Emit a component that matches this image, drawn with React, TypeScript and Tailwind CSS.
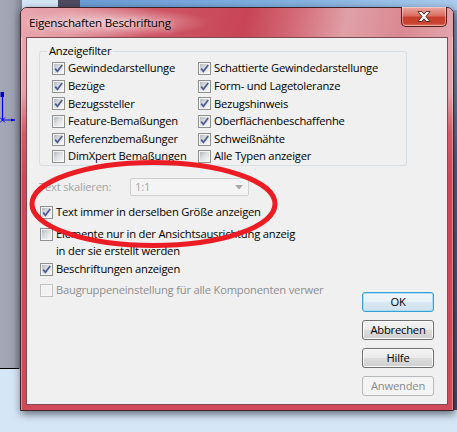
import type { CSSProperties } from 'react';

const uiFont: CSSProperties = { fontFamily: '"Open Sans", "Noto Sans", Arial, sans-serif' };

const leftOptions: [string, boolean][] = [
  ['Gewindedarstellunge', true],
  ['Bezüge', true],
  ['Bezugssteller', true],
  ['Feature-Bemaßungen', false],
  ['Referenzbemaßunger', true],
  ['DimXpert Bemaßungen', false],
];

const rightOptions: [string, boolean][] = [
  ['Schattierte Gewindedarstellunge', true],
  ['Form- und Lagetoleranze', true],
  ['Bezugshinweis', true],
  ['Oberflächenbeschaffenhe', true],
  ['Schweißnähte', true],
  ['Alle Typen anzeiger', false],
];

function CheckBox({ checked = false, disabled = false }: { checked?: boolean; disabled?: boolean }) {
  return (
    <span
      className={`flex h-[13px] w-[13px] shrink-0 items-center justify-center border ${
        disabled ? 'border-[#c2c2c2] bg-[#f6f6f6]' : 'border-[#8e8f8f] bg-[#f6f6f6]'
      }`}
    >
      <span
        className={`relative h-[9px] w-[9px] ${
          disabled ? 'bg-[#f2f2f2]' : 'bg-[linear-gradient(135deg,#b3b8be_0%,#dcdee0_45%,#f7f7f7_100%)]'
        }`}
      >
        {checked && (
          <svg className="absolute -left-[1px] -top-[1px]" width="11" height="11" viewBox="0 0 11 11">
            <path d="M2.2 5.6 L4.4 8.3 L9.2 2" fill="none" stroke="#4b5d90" strokeWidth="1.7" />
          </svg>
        )}
      </span>
    </span>
  );
}

function FilterOption({ label, checked }: { label: string; checked: boolean }) {
  return (
    <div className="flex h-[17.6px] items-center gap-[3px]">
      <CheckBox checked={checked} />
      <span className="whitespace-nowrap">{label}</span>
    </div>
  );
}

function WinButton({ label, kind = 'normal' }: { label: string; kind?: 'normal' | 'default' | 'disabled' }) {
  const look =
    kind === 'default'
      ? 'border-[#3a9fd6] bg-[linear-gradient(#f1f7fb_0%,#e6f0f6_50%,#d9e8f1_51%,#d0e2ee_100%)] shadow-[inset_0_0_0_1px_#a6def8] text-black'
      : kind === 'disabled'
        ? 'border-[#b5b9bc] bg-[#f4f4f4] text-[#8a8a8a]'
        : 'border-[#707070] bg-[linear-gradient(#f3f3f3_0%,#ebebeb_50%,#dddddd_51%,#cfcfcf_100%)] shadow-[inset_0_0_0_1px_#fbfbfb] text-black';
  return (
    <div className={`flex h-[20px] w-[72px] items-center justify-center rounded-[3px] border text-[11.2px] tracking-[-0.2px] ${look}`}>
      {label}
    </div>
  );
}

export default function App() {
  return (
    <div className="relative h-[432px] w-[457px] overflow-hidden bg-[#d5e6f7]" style={uiFont}>
      {/* desktop behind the dialog */}
      <div className="absolute left-0 top-0 h-[369px] w-[22px] bg-[linear-gradient(90deg,#a3a7b6_0%,#9da1b0_60%,#7f8292_100%)]" />
      <div className="absolute left-0 top-[368px] h-px w-[19px] bg-black" />
      <div className="absolute left-[58px] top-0 h-[10px] w-[22px] bg-[#4f4c62]" />
      <div className="absolute left-[80px] right-0 top-0 h-[10px] bg-[linear-gradient(90deg,#6a9cd6_0%,#86b2e2_60%,#a9cbec_100%)]" />
      <div className="absolute right-0 top-[10px] h-[400px] w-[4px] bg-[linear-gradient(#8aa6c8_0%,#5b6b82_40%,#4a5568_100%)]" />
      <svg className="absolute left-0 top-[88px]" width="18" height="36" viewBox="0 0 18 36">
        <path d="M2.5 4 V32 H15" stroke="#0000ee" fill="none" strokeWidth="1.2" />
        <rect x="0.5" y="4" width="3.5" height="5" fill="#0000cc" />
        <path d="M11 30.5 L15.5 32 L11 33.5Z" fill="#0000ee" />
        <path d="M0 34.5 L5 29.5 M0 29.5 L5 34.5" stroke="#0000ee" strokeWidth="1" />
      </svg>

      {/* dialog window */}
      <div className="absolute left-[20px] top-[7px] flex h-[404px] w-[434px] flex-col rounded-t-[7px] border border-[#3e2228] bg-[linear-gradient(#e8a7ae_0px,#e5a1a9_85px,#d55a68_125px,#cf4757_170px,#d14a59_100%)] shadow-[1px_3px_9px_rgba(0,0,0,0.55),inset_1px_0_0_rgba(255,255,255,0.35),inset_-1px_0_0_rgba(255,255,255,0.35)]">
        <div className="relative h-[29px] shrink-0 rounded-t-[6px] bg-[linear-gradient(100deg,#e9a6ad_0%,#e29aa3_12%,#cf5766_30%,#c84554_52%,#d36a77_63%,#e0a0a7_75%,#da8891_88%,#e2a5ac_100%)]">
          <div className="absolute left-0 top-0 h-[29px] w-[190px] bg-[radial-gradient(ellipse_at_center,rgba(255,255,255,0.55)_0%,rgba(255,255,255,0)_70%)]" />
          <div className="relative flex h-full items-center pl-[8px] text-[11.6px] tracking-[-0.2px] text-black [text-shadow:0_0_6px_rgba(255,255,255,0.9)]">
            Eigenschaften Beschriftung
          </div>
          <div className="absolute right-[6px] top-[-1px] flex h-[20px] w-[46px] items-center justify-center rounded-b-[5px] border border-t-0 border-[#5b1a1a] bg-[linear-gradient(#eba9a3_0%,#dc6f62_45%,#c8402c_55%,#c9432f_85%,#e07a62_100%)] shadow-[inset_0_0_0_1px_rgba(255,240,240,0.45)]">
            <svg width="16" height="13" viewBox="0 0 16 13">
              <path
                d="M2 1.5 H5.8 L8 4.2 L10.2 1.5 H14 L10 6.5 L14 11.5 H10.2 L8 8.8 L5.8 11.5 H2 L6 6.5 Z"
                fill="#ffffff"
                stroke="#4a2020"
                strokeWidth="0.9"
                strokeLinejoin="round"
              />
            </svg>
          </div>
        </div>

        <div className="flex flex-1 px-[5px] pb-[5px]">
          <div className="flex-1 border border-[#7d4a52] bg-[#f0f0f0] text-[11.2px] tracking-[-0.2px] text-black">
            {/* Anzeigefilter group */}
            <div className="relative ml-[12px] mt-[13px] h-[115px] w-[368px] rounded-[3px] border border-[#d5dfe5]">
              <div className="absolute -top-[9px] left-[7px] bg-[#f0f0f0] px-[2px] leading-[16px]">Anzeigefilter</div>
              <div className="grid grid-cols-[146px_1fr] pl-[12px] pt-[8px]">
                <div className="flex flex-col">
                  {leftOptions.map(([label, checked]) => (
                    <FilterOption key={label} label={label} checked={checked} />
                  ))}
                </div>
                <div className="flex flex-col">
                  {rightOptions.map(([label, checked]) => (
                    <FilterOption key={label} label={label} checked={checked} />
                  ))}
                </div>
              </div>
            </div>

            <div className="grid grid-cols-[1fr_72px] pr-[13px]">
              <div className="flex flex-col pl-[12px]">
                <div className="mt-[12px] flex h-[18px] items-center">
                  <span className="w-[91px] text-[#a3a3a3]">Text skalieren:</span>
                  <div className="flex h-[18px] w-[119px] items-center justify-between rounded-[2px] border border-[#cfcfcf] bg-[#f4f4f4] pl-[4px] pr-[5px] text-[#a6a6a6]">
                    <span>1:1</span>
                    <svg width="8" height="5" viewBox="0 0 8 5">
                      <path d="M0 0 H8 L4 4.5 Z" fill="#a8a8a8" />
                    </svg>
                  </div>
                </div>
                <div className="mt-[8px] flex h-[17px] items-center gap-[3px] pl-[1px]">
                  <CheckBox checked />
                  <span className="whitespace-nowrap">Text immer in derselben Größe anzeigen</span>
                </div>
                <div className="mt-[5px] flex h-[17px] items-center gap-[3px] pl-[1px]">
                  <CheckBox />
                  <span className="whitespace-nowrap">Elemente nur in der Ansichtsausrichtung anzeig</span>
                </div>
                <div className="flex h-[17px] items-center pl-[17px] whitespace-nowrap">in der sie erstellt werden</div>
                <div className="mt-[1px] flex h-[17px] items-center gap-[3px] pl-[1px]">
                  <CheckBox checked />
                  <span className="whitespace-nowrap">Beschriftungen anzeigen</span>
                </div>
                <div className="mt-[4px] flex h-[17px] items-center gap-[3px] pl-[1px]">
                  <CheckBox disabled />
                  <span className="whitespace-nowrap text-[#8e8e8e]">Baugruppeneinstellung für alle Komponenten verwer</span>
                </div>
              </div>
              <div className="flex flex-col gap-[8px] pt-[126px]">
                <WinButton label="OK" kind="default" />
                <WinButton label="Abbrechen" />
                <WinButton label="Hilfe" />
                <WinButton label="Anwenden" kind="disabled" />
              </div>
            </div>
          </div>
        </div>
      </div>

      {/* red annotation ellipse */}
      <svg className="pointer-events-none absolute left-0 top-0" width="457" height="432" viewBox="0 0 457 432">
        <ellipse cx="153.5" cy="204" rx="121.5" ry="41.5" fill="none" stroke="#ec1c24" strokeWidth="5" />
      </svg>
    </div>
  );
}
